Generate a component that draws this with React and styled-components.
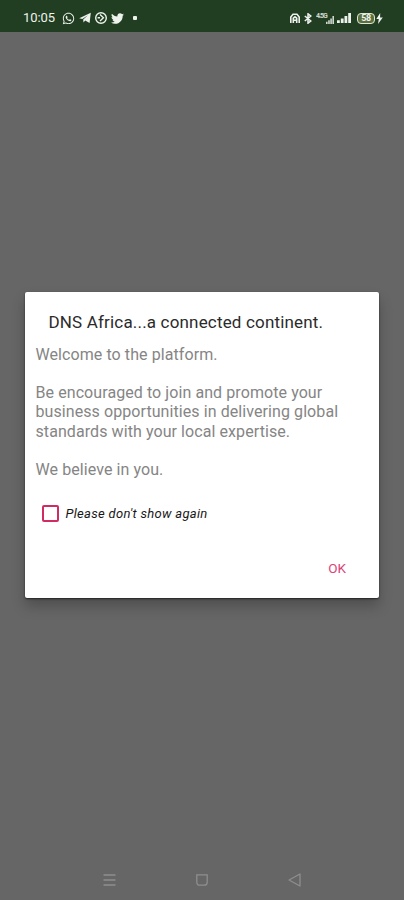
import styled, { createGlobalStyle } from "styled-components";
import { FaWhatsapp, FaTwitter } from "react-icons/fa";

const GlobalStyle = createGlobalStyle`
    * {
        box-sizing: border-box;
    }
    body {
        margin: 0;
        background-color: #666666;
        font-family: Roboto, "Liberation Sans", sans-serif;
    }
`;

const Screen = styled.div`
    display: flex;
    flex-direction: column;
    width: 404px;
    height: 900px;
    overflow: hidden;
    background-color: #666666;
`;

const StatusBar = styled.header`
    display: flex;
    justify-content: space-between;
    align-items: center;
    height: 32px;
    padding: 4px 21px 0 23px;
    background-color: #213e22;
    color: #eef2ec;
    svg {
        display: block;
        flex: none;
    }
`;

const StatusGroup = styled.div`
    display: flex;
    align-items: center;
    gap: ${props => props.$gap}px;
`;

const Clock = styled.span`
    width: 35px;
    font-size: 13px;
    line-height: 16px;
    letter-spacing: -0.1px;
`;

const Dot = styled.span`
    width: 4px;
    height: 4px;
    margin-left: 5px;
    border-radius: 1px;
    background-color: #eef2ec;
`;

const Network = styled.div`
    display: flex;
    align-items: flex-end;
    width: 17px;
    height: 11px;
    opacity: 0.85;
    span {
        align-self: flex-start;
        width: 10px;
        font-size: 7px;
        font-weight: 700;
        line-height: 6px;
        letter-spacing: -1px;
    }
`;

const Battery = styled.div`
    display: flex;
    justify-content: center;
    align-items: center;
    width: 18px;
    height: 11px;
    margin-left: 2px;
    border: 1px solid #dfe8d6;
    border-radius: 4px;
    background-color: #5c703f;
    font-size: 9px;
    font-weight: 700;
    line-height: 9px;
    letter-spacing: -0.4px;
`;

const Content = styled.main`
    flex: 1;
    padding: 260px 25px 0 25px;
`;

const Dialog = styled.section`
    display: flex;
    flex-direction: column;
    height: 306px;
    padding: 20px 10.5px 18px;
    border-radius: 2px;
    background-color: #ffffff;
    box-shadow: 0 1px 2px rgba(0, 0, 0, 0.6), 0 8px 14px rgba(0, 0, 0, 0.24);
`;

const Title = styled.h1`
    margin: 0 0 13px 13px;
    font-size: 17px;
    font-weight: 400;
    line-height: 20px;
    letter-spacing: 0.17px;
    color: #2b2b2b;
    white-space: nowrap;
`;

const Message = styled.p`
    margin: 0;
    font-size: 16px;
    line-height: 19.15px;
    letter-spacing: 0.08px;
    color: #858585;
    white-space: pre-line;
`;

const CheckRow = styled.label`
    display: flex;
    align-items: center;
    gap: 6.5px;
    margin: 25.95px 0 0 6.5px;
    font-size: 13px;
    font-style: italic;
    line-height: 17px;
    letter-spacing: 0.3px;
    color: #171717;
    input {
        appearance: none;
        width: 17px;
        height: 17px;
        margin: 0;
        border: 2px solid #d02c61;
        border-radius: 2px;
    }
`;

const OkButton = styled.button`
    align-self: flex-end;
    margin: auto 22.5px 0 0;
    padding: 0;
    border: 0;
    background: none;
    font-family: inherit;
    font-size: 13.5px;
    font-weight: 400;
    line-height: 24px;
    color: #d9457a;
`;

const NavBar = styled.nav`
    display: flex;
    justify-content: space-between;
    align-items: center;
    height: 40px;
    padding: 0 103px 0 103px;
    color: #8e8e8e;
    svg {
        display: block;
    }
`;

const text = `Welcome to the platform.

Be encouraged to join and promote your
business opportunities in delivering global
standards with your local expertise.

We believe in you.`;

function TelegramIcon() {
    return (
        <svg width="12" height="12" viewBox="0 0 12 12" fill="currentColor">
            <path d="M11.8.8 10.6 11 6.2 8.6 4.5 10.5 4.2 7.6 9 3.2 3.3 7.1.2 6.2z" />
        </svg>
    );
}

function ClockIcon() {
    return (
        <svg width="12" height="12" viewBox="0 0 12 12" fill="none" stroke="currentColor" strokeWidth="1.4">
            <circle cx="6" cy="6" r="5.3" />
            <path d="M5 2.5 8.4 5.8 5 9M2.6 5.8H5" />
        </svg>
    );
}

function HomeIcon() {
    return (
        <svg width="10" height="11" viewBox="0 0 10 11" fill="none" stroke="currentColor" strokeWidth="1.6">
            <path d="M.8 10V4L3 1.3h4L9.2 4v6M3.3 10V5.2l1.7-1.4 1.7 1.4V10M3 7.2h4" />
        </svg>
    );
}

function BluetoothIcon() {
    return (
        <svg width="8" height="11" viewBox="0 0 8 11" fill="none" stroke="currentColor" strokeWidth="1.5">
            <path d="m.8 3 6 5L4 10.2V.8L6.8 3l-6 5" />
        </svg>
    );
}

function SignalIcon(props) {
    return (
        <svg width={props.width} height={props.height} viewBox="0 0 14 11" preserveAspectRatio="none" fill="currentColor">
            <path d="M0 8H2.8v3H0zM3.8 6h2.8v5H3.8zM7.5 3.3h2.8V11H7.5zM11.2 0H14v11h-2.8z" />
        </svg>
    );
}

export default function App() {
    return (
        <>
            <GlobalStyle />
            <Screen>
                <StatusBar>
                    <StatusGroup $gap={4}>
                        <Clock>10:05</Clock>
                        <FaWhatsapp size={13} />
                        <TelegramIcon />
                        <ClockIcon />
                        <FaTwitter size={13} />
                        <Dot />
                    </StatusGroup>
                    <StatusGroup $gap={4}>
                        <HomeIcon />
                        <BluetoothIcon />
                        <Network>
                            <span>4.5G</span>
                            <SignalIcon width={8} height={8} />
                        </Network>
                        <SignalIcon width={14} height={10} />
                        <Battery>58</Battery>
                        <svg width="7" height="11" viewBox="0 0 7 11" fill="currentColor" style={{ marginLeft: -3 }}>
                            <path d="M4.2 0 .3 6h2.5L2 11l4.8-6.5H4.1z" />
                        </svg>
                    </StatusGroup>
                </StatusBar>
                <Content>
                    <Dialog role="dialog">
                        <Title>DNS Africa...a connected continent.</Title>
                        <Message>{text}</Message>
                        <CheckRow>
                            <input type="checkbox" />
                            Please don't show again
                        </CheckRow>
                        <OkButton>OK</OkButton>
                    </Dialog>
                </Content>
                <NavBar>
                    <svg width="13" height="12" viewBox="0 0 13 12" stroke="currentColor" strokeWidth="1.4">
                        <path d="M.5 1h12M.5 6h12M.5 11h12" />
                    </svg>
                    <svg width="12" height="12" viewBox="0 0 12 12" fill="none" stroke="currentColor" strokeWidth="1.3">
                        <path d="M.8.8h10.4v7.4q0 3-3 3H3.8q-3 0-3-3z" />
                    </svg>
                    <svg width="13" height="14" viewBox="0 0 13 14" fill="none" stroke="currentColor" strokeWidth="1.3" strokeLinejoin="round">
                        <path d="M12 1v12L1 7z" />
                    </svg>
                </NavBar>
            </Screen>
        </>
    );
}
